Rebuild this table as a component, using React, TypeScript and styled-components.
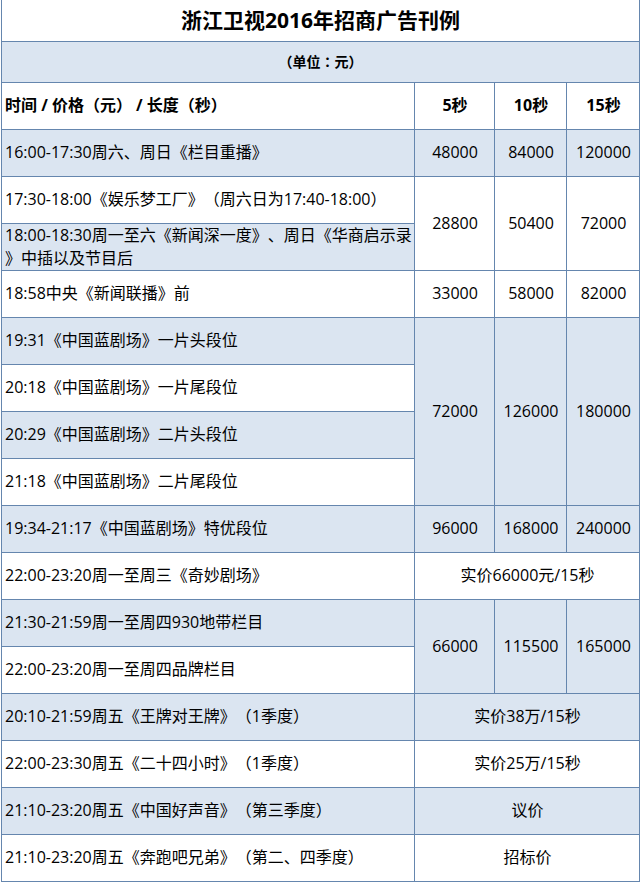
import React from "react";
import styled, { createGlobalStyle } from "styled-components";

const Global = createGlobalStyle`
  html, body { margin: 0; padding: 0; background: #ffffff; }
  body {
    font-family: "Open Sans", "Noto Sans CJK SC", sans-serif;
    color: #000;
    text-spacing-trim: space-all;
  }
`;

const Page = styled.div`
  padding-left: 1px;
  width: 640px;
`;

const Table = styled.table`
  border-collapse: collapse;
  table-layout: fixed;
  width: 638px;
  font-size: 16px;
  line-height: 23px;
  text-spacing-trim: space-all;
`;

const Row = styled.tr<{ $h?: number }>`
  height: ${(p) => p.$h ?? 47}px;
`;

const Cell = styled.td<{ $blue?: boolean; $left?: boolean; $bold?: boolean }>`
  border: 1px solid #6586ae;
  background: ${(p) => (p.$blue ? "#dbe5f1" : "#ffffff")};
  text-align: ${(p) => (p.$left ? "left" : "center")};
  font-weight: ${(p) => (p.$bold ? 700 : 400)};
  padding: 0 2px 0 3px;
  vertical-align: middle;
  white-space: nowrap;
  overflow: hidden;
`;

const TitleCell = styled.td`
  border: 1px solid #6586ae;
  border-top: none;
  background: #ffffff;
  text-align: center;
  font-size: 21px;
  font-weight: 700;
  padding: 0;
`;

const UnitCell = styled.td`
  border: 1px solid #6586ae;
  background: #dbe5f1;
  text-align: center;
  font-family: "Open Sans", "Noto Sans CJK TC", sans-serif;
  font-size: 14px;
  font-weight: 700;
  padding: 0;
`;

export default function App() {
  return (
    <Page>
      <Global />
      <Table>
        <colgroup>
          <col style={{ width: 413 }} />
          <col style={{ width: 80 }} />
          <col style={{ width: 72 }} />
          <col style={{ width: 73 }} />
        </colgroup>
        <tbody>
          <Row $h={41}>
            <TitleCell colSpan={4}>浙江卫视2016年招商广告刊例</TitleCell>
          </Row>
          <Row $h={41}>
            <UnitCell colSpan={4}>（单位：元）</UnitCell>
          </Row>
          <Row>
            <Cell $left $bold>时间 / 价格（元） / 长度（秒）</Cell>
            <Cell $bold>5秒</Cell>
            <Cell $bold>10秒</Cell>
            <Cell $bold>15秒</Cell>
          </Row>
          <Row>
            <Cell $left $blue>16:00-17:30周六、周日《栏目重播》</Cell>
            <Cell $blue>48000</Cell>
            <Cell $blue>84000</Cell>
            <Cell $blue>120000</Cell>
          </Row>
          <Row>
            <Cell $left>17:30-18:00《娱乐梦工厂》（周六日为17:40-18:00）</Cell>
            <Cell rowSpan={2}>28800</Cell>
            <Cell rowSpan={2}>50400</Cell>
            <Cell rowSpan={2}>72000</Cell>
          </Row>
          <Row>
            <Cell $left $blue>
              18:00-18:30周一至六《新闻深一度》、周日《华商启示录<br />》中插以及节目后
            </Cell>
          </Row>
          <Row>
            <Cell $left>18:58中央《新闻联播》前</Cell>
            <Cell>33000</Cell>
            <Cell>58000</Cell>
            <Cell>82000</Cell>
          </Row>
          <Row>
            <Cell $left $blue>19:31《中国蓝剧场》一片头段位</Cell>
            <Cell $blue rowSpan={4}>72000</Cell>
            <Cell $blue rowSpan={4}>126000</Cell>
            <Cell $blue rowSpan={4}>180000</Cell>
          </Row>
          <Row>
            <Cell $left>20:18《中国蓝剧场》一片尾段位</Cell>
          </Row>
          <Row>
            <Cell $left $blue>20:29《中国蓝剧场》二片头段位</Cell>
          </Row>
          <Row>
            <Cell $left>21:18《中国蓝剧场》二片尾段位</Cell>
          </Row>
          <Row>
            <Cell $left $blue>19:34-21:17《中国蓝剧场》特优段位</Cell>
            <Cell $blue>96000</Cell>
            <Cell $blue>168000</Cell>
            <Cell $blue>240000</Cell>
          </Row>
          <Row>
            <Cell $left>22:00-23:20周一至周三《奇妙剧场》</Cell>
            <Cell colSpan={3}>实价66000元/15秒</Cell>
          </Row>
          <Row>
            <Cell $left $blue>21:30-21:59周一至周四930地带栏目</Cell>
            <Cell $blue rowSpan={2}>66000</Cell>
            <Cell $blue rowSpan={2}>115500</Cell>
            <Cell $blue rowSpan={2}>165000</Cell>
          </Row>
          <Row>
            <Cell $left>22:00-23:20周一至周四品牌栏目</Cell>
          </Row>
          <Row>
            <Cell $left $blue>20:10-21:59周五《王牌对王牌》（1季度）</Cell>
            <Cell $blue colSpan={3}>实价38万/15秒</Cell>
          </Row>
          <Row>
            <Cell $left>22:00-23:30周五《二十四小时》（1季度）</Cell>
            <Cell colSpan={3}>实价25万/15秒</Cell>
          </Row>
          <Row>
            <Cell $left $blue>21:10-23:20周五《中国好声音》（第三季度）</Cell>
            <Cell $blue colSpan={3}>议价</Cell>
          </Row>
          <Row>
            <Cell $left>21:10-23:20周五《奔跑吧兄弟》（第二、四季度）</Cell>
            <Cell colSpan={3}>招标价</Cell>
          </Row>
        </tbody>
      </Table>
    </Page>
  );
}
